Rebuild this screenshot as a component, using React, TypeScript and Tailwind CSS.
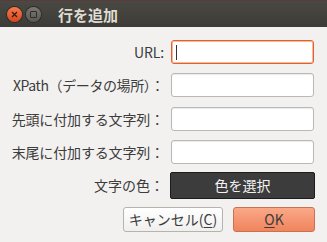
import React from "react";

const font = { fontFamily: '"Noto Sans CJK JP", "Noto Sans", sans-serif' };

function Field({ focused }: { focused?: boolean }) {
  return (
    <div
      className={
        "relative h-[24px] w-[143px] rounded-[3px] bg-white " +
        (focused
          ? "border border-[#e2622e] shadow-[inset_0_0_0_1px_#f5b79f]"
          : "border border-[#b9b8b4] shadow-[inset_0_1px_1px_rgba(0,0,0,0.08)]")
      }
    >
      {focused && <div className="absolute left-[4px] top-[4px] h-[15px] w-[1px] bg-[#333]" />}
    </div>
  );
}

export default function App() {
  const labels = [
    "URL:",
    "XPath（データの場所）：",
    "先頭に付加する文字列：",
    "末尾に付加する文字列：",
  ];
  return (
    <div className="h-[242px] w-[327px] overflow-hidden bg-[#f2f1f0] text-[#3c3c3c]" style={font}>
      <div className="flex h-[27px] items-center bg-gradient-to-b from-[#4a4843] to-[#3c3b37] border-t border-[#5a3a3a]">
        <div className="ml-[7px] flex h-[15px] w-[15px] items-center justify-center rounded-full bg-gradient-to-b from-[#f57a4c] to-[#d8461a] shadow-[0_0_0_1px_#2d2c29]">
          <svg width="7" height="7" viewBox="0 0 7 7">
            <path d="M1 1 L6 6 M6 1 L1 6" stroke="#3a1a10" strokeWidth="1.3" />
          </svg>
        </div>
        <div className="ml-[4px] flex h-[15px] w-[15px] items-center justify-center rounded-full bg-gradient-to-b from-[#7a7872] to-[#5a5853] shadow-[0_0_0_1px_#2d2c29]">
          <div className="h-[7px] w-[7px] rounded-[1px] border border-[#2e2d2a]" />
        </div>
        <div className="ml-[17px] text-[15px] font-bold leading-none text-[#dfdbd2]">行を追加</div>
      </div>

      <div className="grid grid-cols-[164px_143px] gap-x-[7px] gap-y-[9.4px] pt-[13px]">
        {labels.map((l, i) => (
          <React.Fragment key={l}>
            <div
              className={
                "flex h-[24px] items-center justify-end text-[14px] leading-none " +
                (i === 1 ? "tracking-[-0.4px]" : "tracking-[-0.15px]")
              }
            >
              {l}
            </div>
            <Field focused={i === 0} />
          </React.Fragment>
        ))}
        <div className="-mt-[2px] flex h-[27px] items-center justify-end text-[14px] leading-none">文字の色：</div>
        <div className="-mt-[2px] -ml-[1px] flex h-[27px] w-[145px] items-center justify-center rounded-[2px] border border-[#1c1c1c] bg-[#3c3c3c] text-[14px] leading-none text-[#f2f2f2]">
          色を選択
        </div>
      </div>

      <div className="mt-[8px] flex justify-end gap-[10px] pr-[12px]">
        <div className="flex h-[25px] w-[100px] items-center justify-center rounded-[3px] border border-[#b4b3ae] bg-gradient-to-b from-[#ffffff] to-[#f0efee] text-[14px] leading-none">
          キャンセル(<span className="underline underline-offset-2">C</span>)
        </div>
        <div className="flex h-[25px] w-[82px] items-center justify-center rounded-[3px] border border-[#c9724f] bg-gradient-to-b from-[#faa888] to-[#f0845c] text-[14px] leading-none">
          <span className="underline underline-offset-2">O</span>K
        </div>
      </div>
    </div>
  );
}
